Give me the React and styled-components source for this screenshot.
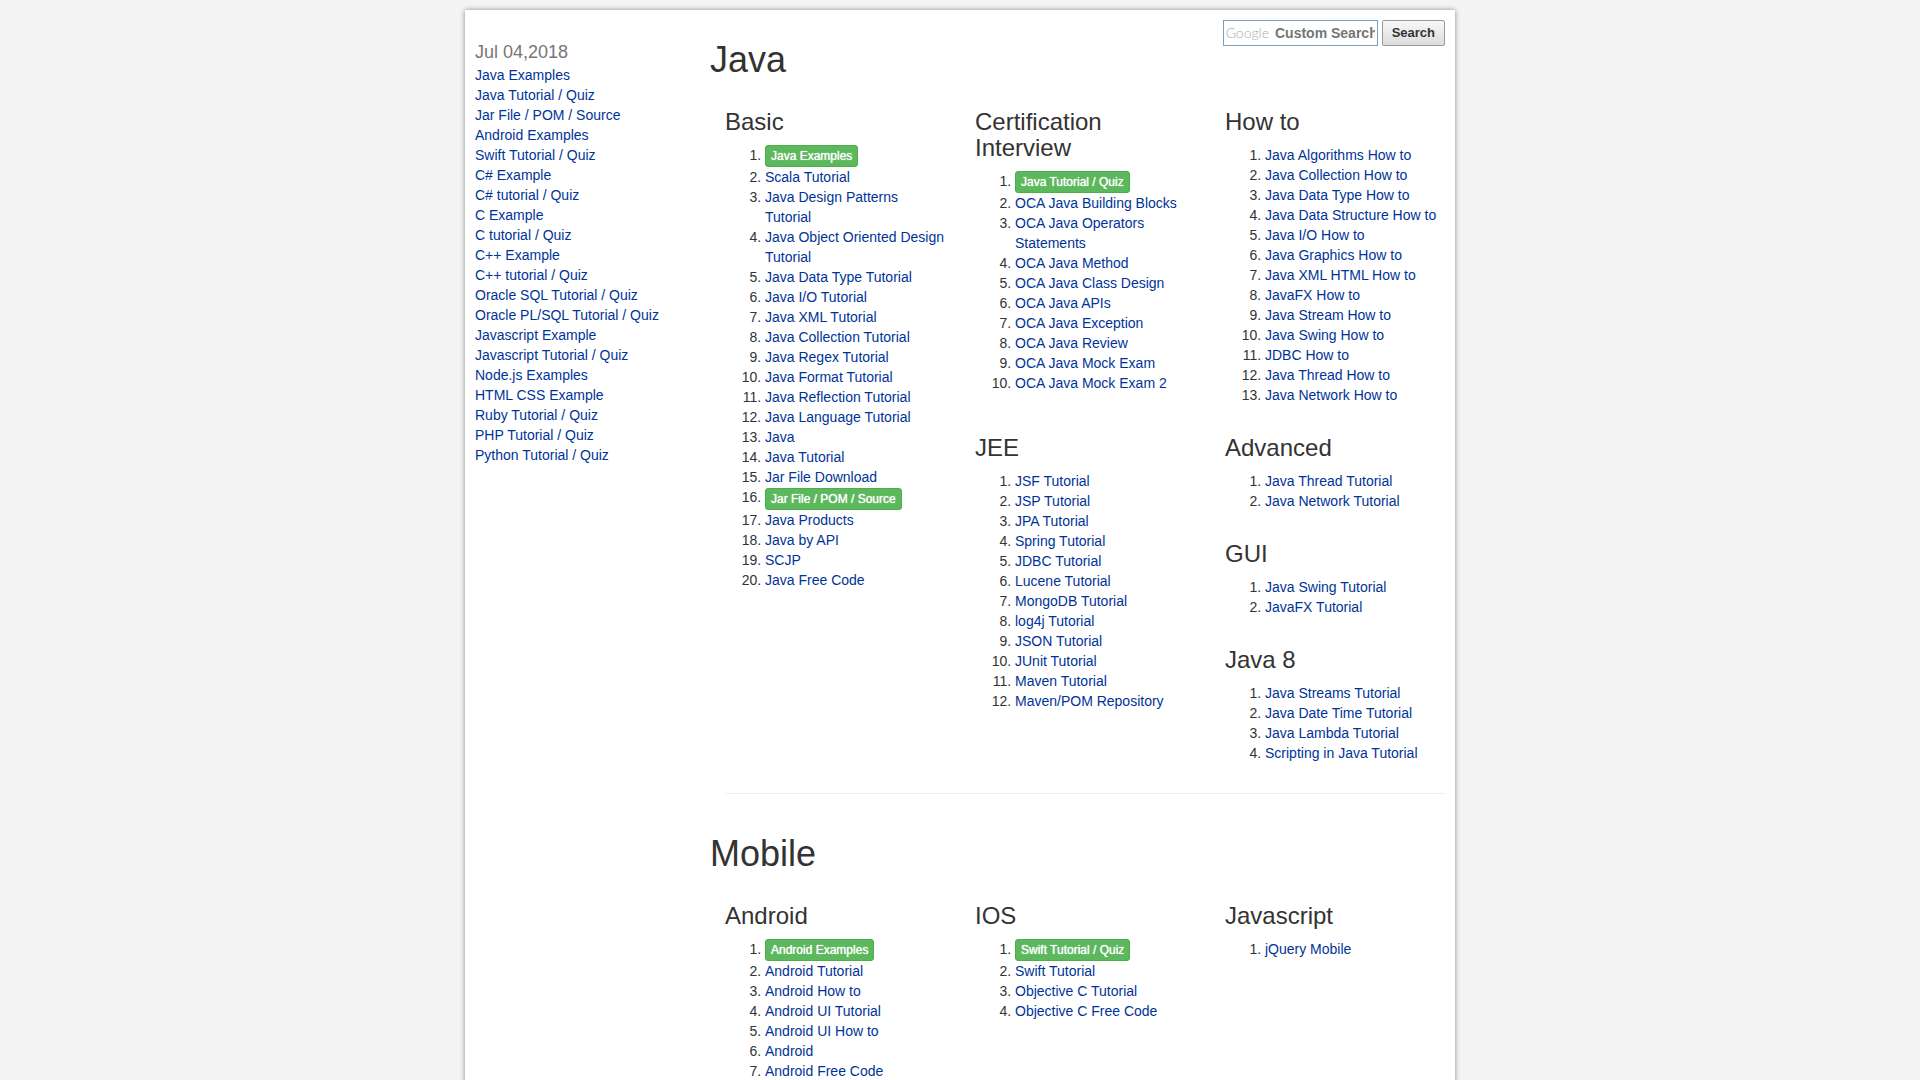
import React from "react";
import styled, { createGlobalStyle, css } from "styled-components";

const GlobalStyle = createGlobalStyle`
  *, *::before, *::after { box-sizing: border-box; }
  body {
    margin: 0;
    background: #f4f4f4;
    color: #333;
    font: 14px/20px "Liberation Sans", Arial, sans-serif;
  }
`;

const Page = styled.div`
  display: flex;
  max-width: 990px;
  margin: 10px auto 0;
  padding: 10px;
  background: #fff;
  box-shadow: 0 0 5px #888;
`;

const Sidebar = styled.nav`
  flex: 0 0 235px;
  padding-top: 22px;
`;

const DateLine = styled.h4`
  margin: 0 0 3px;
  font-size: 18px;
  font-weight: 400;
  line-height: 20px;
  color: #777;
`;

const SideList = styled.ul`
  margin: 0;
  padding: 0;
  list-style: none;
`;

const Main = styled.main`
  display: flex;
  flex-direction: column;
  flex: 1;
  min-width: 0;
`;

const TopicHeader = styled.header`
  display: flex;
  justify-content: space-between;
  align-items: flex-start;
`;

const TopicTitle = styled.h1`
  margin: 20px 0 10px;
  font-size: 36px;
  font-weight: 400;
  line-height: 39px;
`;

const SearchForm = styled.form`
  display: flex;
  gap: 4px;
`;

const SearchBox = styled.label`
  display: flex;
  align-items: center;
  gap: 6px;
  width: 155px;
  height: 26px;
  padding: 0 2px;
  border: 1px solid #7e9db9;
  background: #fff;
`;

const Brand = styled.span`
  color: #aaa;
  font: 300 14px/20px Lato, sans-serif;
`;

const SearchInput = styled.input`
  flex: 1;
  min-width: 0;
  padding: 0;
  border: 0;
  outline: 0;
  background: transparent;
  color: #333;
  font: bold 14px/20px "Liberation Sans", Arial, sans-serif;
  &::placeholder { color: #757575; opacity: 1; }
`;

const SearchButton = styled.button`
  height: 26px;
  padding: 0 9px;
  border: 1px solid #999;
  border-radius: 2px;
  background: linear-gradient(#f8f8f8, #dcdcdc);
  color: #333;
  font: bold 13px/20px "Liberation Sans", Arial, sans-serif;
`;

const Columns = styled.div`
  display: grid;
  grid-template-columns: repeat(${(p) => p.$count}, minmax(0, 1fr));
  gap: 0 30px;
  ${(p) => p.$indent && css`padding-left: 15px;`}
  ${(p) => p.$span && css`grid-column: span ${p.$span}; align-content: start;`}
`;

const GroupBox = styled.section`
  display: flow-root;
`;

const GroupTitle = styled.h3`
  margin: 20px 0 10px;
  font-size: 24px;
  font-weight: 400;
  line-height: 26px;
`;

const LinkList = styled.ol`
  margin: 0 0 10px;
  padding-left: 40px;
`;

const TextLink = styled.a`
  color: #039;
  text-decoration: none;
  &:hover { text-decoration: underline; }
`;

const BadgeLink = styled.a`
  display: inline-block;
  padding: 1px 5px;
  border: 1px solid #4cae4c;
  border-radius: 3px;
  background: #5cb85c;
  color: #fff;
  font-size: 12px;
  line-height: 18px;
  text-decoration: none;
  text-shadow: 0 0 1px #fff;
  vertical-align: middle;
`;

const Divider = styled.hr`
  align-self: stretch;
  margin: 20px 0 20px 15px;
  border: 0;
  border-top: 1px solid #eee;
`;

const sideLinks = [
  "Java Examples", "Java Tutorial / Quiz", "Jar File / POM / Source", "Android Examples",
  "Swift Tutorial / Quiz", "C# Example", "C# tutorial / Quiz", "C Example", "C tutorial / Quiz",
  "C++ Example", "C++ tutorial / Quiz", "Oracle SQL Tutorial / Quiz",
  "Oracle PL/SQL Tutorial / Quiz", "Javascript Example", "Javascript Tutorial / Quiz",
  "Node.js Examples", "HTML CSS Example", "Ruby Tutorial / Quiz", "PHP Tutorial / Quiz",
  "Python Tutorial / Quiz",
];

const badges = new Set([
  "Java Examples", "Jar File / POM / Source", "Java Tutorial / Quiz",
  "Android Examples", "Swift Tutorial / Quiz",
]);

const groups = {
  Basic: [
    "Java Examples", "Scala Tutorial", "Java Design Patterns Tutorial",
    "Java Object Oriented Design Tutorial", "Java Data Type Tutorial", "Java I/O Tutorial",
    "Java XML Tutorial", "Java Collection Tutorial", "Java Regex Tutorial",
    "Java Format Tutorial", "Java Reflection Tutorial", "Java Language Tutorial", "Java",
    "Java Tutorial", "Jar File Download", "Jar File / POM / Source", "Java Products",
    "Java by API", "SCJP", "Java Free Code",
  ],
  "Certification Interview": [
    "Java Tutorial / Quiz", "OCA Java Building Blocks", "OCA Java Operators Statements",
    "OCA Java Method", "OCA Java Class Design", "OCA Java APIs", "OCA Java Exception",
    "OCA Java Review", "OCA Java Mock Exam", "OCA Java Mock Exam 2",
  ],
  "How to": [
    "Java Algorithms How to", "Java Collection How to", "Java Data Type How to",
    "Java Data Structure How to", "Java I/O How to", "Java Graphics How to",
    "Java XML HTML How to", "JavaFX How to", "Java Stream How to", "Java Swing How to",
    "JDBC How to", "Java Thread How to", "Java Network How to",
  ],
  JEE: [
    "JSF Tutorial", "JSP Tutorial", "JPA Tutorial", "Spring Tutorial", "JDBC Tutorial",
    "Lucene Tutorial", "MongoDB Tutorial", "log4j Tutorial", "JSON Tutorial",
    "JUnit Tutorial", "Maven Tutorial", "Maven/POM Repository",
  ],
  Advanced: ["Java Thread Tutorial", "Java Network Tutorial"],
  GUI: ["Java Swing Tutorial", "JavaFX Tutorial"],
  "Java 8": [
    "Java Streams Tutorial", "Java Date Time Tutorial", "Java Lambda Tutorial",
    "Scripting in Java Tutorial",
  ],
  Android: [
    "Android Examples", "Android Tutorial", "Android How to", "Android UI Tutorial",
    "Android UI How to", "Android", "Android Free Code",
  ],
  IOS: [
    "Swift Tutorial / Quiz", "Swift Tutorial", "Objective C Tutorial", "Objective C Free Code",
  ],
  Javascript: ["jQuery Mobile"],
};

function Group({ name }) {
  return (
    <GroupBox>
      <GroupTitle>{name}</GroupTitle>
      <LinkList>
        {groups[name].map((text) => {
          const Item = badges.has(text) ? BadgeLink : TextLink;
          return <li key={text}><Item href="#">{text}</Item></li>;
        })}
      </LinkList>
    </GroupBox>
  );
}

export default function App() {
  return (
    <>
      <GlobalStyle />
      <Page>
        <Sidebar>
          <DateLine>Jul 04,2018</DateLine>
          <SideList>
            {sideLinks.map((text) => (
              <li key={text}><TextLink href="#">{text}</TextLink></li>
            ))}
          </SideList>
        </Sidebar>
        <Main>
          <TopicHeader>
            <TopicTitle>Java</TopicTitle>
            <SearchForm onSubmit={(e) => e.preventDefault()}>
              <SearchBox>
                <Brand>Google</Brand>
                <SearchInput type="text" placeholder="Custom Search" />
              </SearchBox>
              <SearchButton type="submit">Search</SearchButton>
            </SearchForm>
          </TopicHeader>
          <Columns $count={3} $indent>
            <Group name="Basic" />
            <Columns $count={2} $span={2}>
              <Group name="Certification Interview" />
              <Group name="How to" />
              <Group name="JEE" />
              <div>
                <Group name="Advanced" />
                <Group name="GUI" />
                <Group name="Java 8" />
              </div>
            </Columns>
          </Columns>
          <Divider />
          <TopicTitle>Mobile</TopicTitle>
          <Columns $count={3} $indent>
            <Group name="Android" />
            <Group name="IOS" />
            <Group name="Javascript" />
          </Columns>
        </Main>
      </Page>
    </>
  );
}
